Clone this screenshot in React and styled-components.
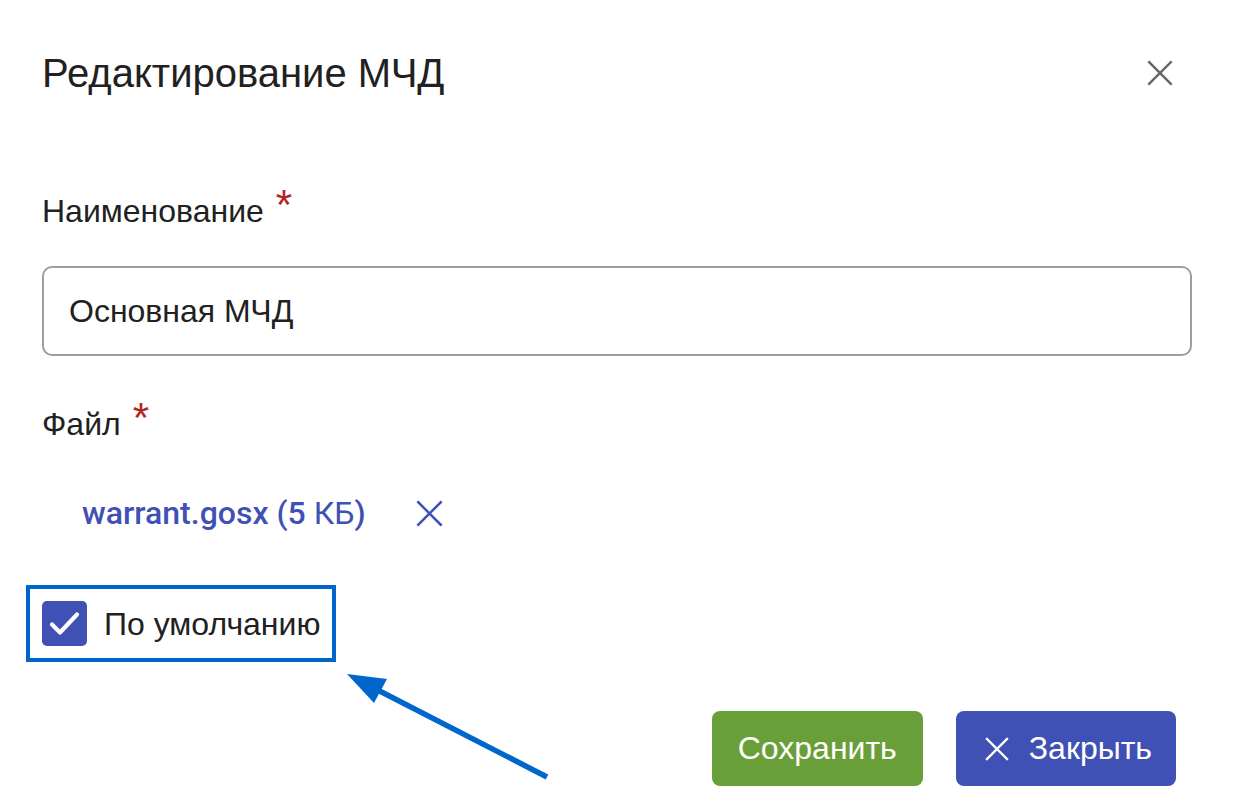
import React, { useState } from 'react'
import styled, { createGlobalStyle } from 'styled-components'

const GlobalStyle = createGlobalStyle`
    body {
        margin: 0;
        background: #fff;
        font-family: "Liberation Sans", Arial, sans-serif;
        color: #212121;
    }
`;

const CrossIcon = ({ size, color, width }) => (
    <svg width={size} height={size} viewBox="0 0 24 24" fill="none">
        <path d="M2 2 L22 22 M22 2 L2 22" stroke={color} strokeWidth={width} strokeLinecap="square" />
    </svg>
)

const App = () => {
    const [name, setName] = useState('Основная МЧД');
    const [isDefault, setIsDefault] = useState(true);

  return (
    <>
    <GlobalStyle />
    <Dialog>
        <Header>
            <Title>Редактирование МЧД</Title>
            <IconButton aria-label="close">
                <CrossIcon size={26} color="#666" width={2.2} />
            </IconButton>
        </Header>

        <Label $top={39}>Наименование<Required>*</Required></Label>
        <Input value={name} onChange={ (e) => setName(e.target.value) } type='text' />

        <Label $top={42}>Файл<Required>*</Required></Label>
        <FileRow>
            <FileLink>warrant.gosx (5 <Thin>КБ</Thin>)</FileLink>
            <IconButton aria-label="remove file">
                <CrossIcon size={27} color="#3f51b5" width={2.2} />
            </IconButton>
        </FileRow>

        <CheckRow onClick={ () => setIsDefault(!isDefault) }>
            <Box $checked={isDefault}>
                {isDefault && (
                    <svg width="45" height="45" viewBox="0 0 45 45" fill="none">
                        <path d="M10 23.5 L18 31.5 L35 13.5" stroke="#fff" strokeWidth="4.2" strokeLinecap="round" strokeLinejoin="round" />
                    </svg>
                )}
            </Box>
            <CheckText>По умолчанию</CheckText>
        </CheckRow>

        <Footer>
            <Button $color="#699f38" $pad="0 26px">Сохранить</Button>
            <Button $color="#3f51b5" $pad="0 24px 0 29px">
                <CrossIcon size={24} color="#fff" width={2.4} />
                Закрыть
            </Button>
        </Footer>

        <Arrow width="1234" height="812" viewBox="0 0 1234 812">
            <line x1="547" y1="777" x2="366" y2="684" stroke="#0066cc" strokeWidth="5.5" />
            <polygon points="347,674 387,679 374,703" fill="#0066cc" />
        </Arrow>
    </Dialog>
    </>
  )
}

const Dialog = styled.div`
    position: relative;
    width: 1234px;
    height: 812px;
    padding: 0 42px;
    box-sizing: border-box;
    display: flex;
    flex-direction: column;
    align-items: flex-start;
    overflow: hidden;
`;

const Header = styled.div`
    align-self: stretch;
    height: 146px;
    display: flex;
    align-items: center;
    justify-content: space-between;
    padding-right: 19px;
`;

const Title = styled.h1`
    margin: 0;
    font-size: 40px;
    line-height: 48px;
    font-weight: 400;
    color: #212121;
`;

const IconButton = styled.button`
    display: flex;
    align-items: center;
    justify-content: center;
    padding: 0;
    border: none;
    background: transparent;
    cursor: pointer;
`;

const Label = styled.div`
    margin-top: ${p => p.$top}px;
    font-size: 32px;
    line-height: 40px;
    color: #212121;
`;

const Required = styled.span`
    margin-left: 12px;
    color: #b3261e;
    font-size: 42px;
    vertical-align: 3px;
`;

const Input = styled.input`
    align-self: stretch;
    margin-top: 35px;
    height: 90px;
    box-sizing: border-box;
    padding: 0 25px;
    border: 2px solid #9e9e9e;
    border-radius: 10px;
    font-family: "Liberation Sans", Arial, sans-serif;
    font-size: 32px;
    color: #212121;
    outline: none;
`;

const FileRow = styled.div`
    margin-top: 49px;
    padding-left: 40px;
    display: flex;
    align-items: center;
    gap: 50px;
`;

const FileLink = styled.a`
    font-family: Roboto, "Liberation Sans", sans-serif;
    font-size: 32px;
    line-height: 40px;
    font-weight: 500;
    color: #3f51b5;
    text-decoration: none;
    cursor: pointer;
`;

const Thin = styled.span`
    font-weight: 400;
`;

const CheckRow = styled.label`
    margin-top: 68px;
    display: flex;
    align-items: center;
    gap: 17px;
    cursor: pointer;
    outline: 4px solid #0066cc;
    outline-offset: 12px;
`;

const Box = styled.span`
    width: 45px;
    height: 45px;
    border-radius: 5px;
    display: flex;
    background: ${p => p.$checked ? '#3f51b5' : '#fff'};
    border: ${p => p.$checked ? 'none' : '2px solid #757575'};
    box-sizing: border-box;
`;

const CheckText = styled.span`
    font-size: 32px;
    line-height: 40px;
    color: #212121;
`;

const Footer = styled.div`
    align-self: stretch;
    margin-top: 65px;
    padding-right: 16px;
    display: flex;
    justify-content: flex-end;
    gap: 33px;
`;

const Button = styled.button`
    height: 75px;
    padding: ${p => p.$pad};
    display: flex;
    align-items: center;
    gap: 20px;
    border: none;
    border-radius: 8px;
    background: ${p => p.$color};
    color: #fff;
    font-family: "Liberation Sans", Arial, sans-serif;
    font-size: 32px;
    cursor: pointer;
`;

const Arrow = styled.svg`
    position: absolute;
    left: 0;
    top: 0;
    pointer-events: none;
`;

export default App
